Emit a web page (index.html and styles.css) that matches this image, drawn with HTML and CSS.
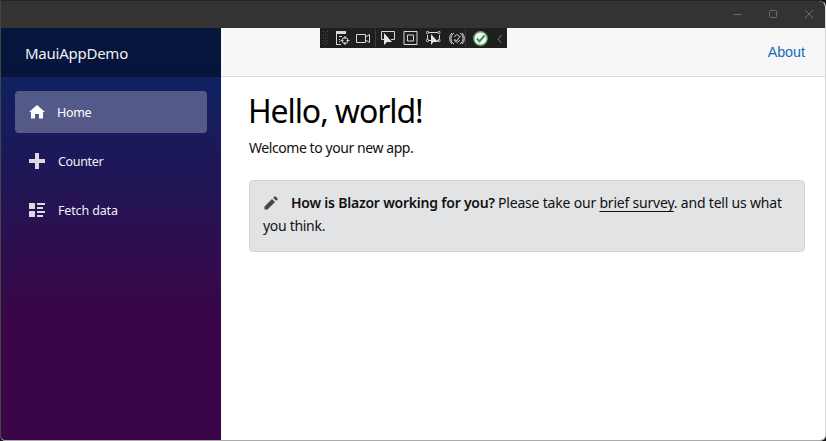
FILE: index.html
```html
<!DOCTYPE html>
<html lang="en">
<head>
<meta charset="utf-8">
<title>MauiAppDemo</title>
<link rel="stylesheet" href="styles.css">
</head>
<body>
<div class="window">
  <header class="titlebar">
    <svg class="caption" width="92" height="12" viewBox="0 0 92 12" fill="none" stroke="#6c6c6c">
      <path d="M1 6.500h8"/><rect x="36.500" y="2.500" width="7" height="7" rx="1"/><path d="M72 2l8 8M80 2l-8 8"/>
    </svg>
  </header>
  <div class="page">
    <aside class="sidebar">
      <div class="brand"><span class="brand-name">MauiAppDemo</span></div>
      <nav class="nav">
        <a class="item active"><svg width="16" height="16" viewBox="0 0 16 16" fill="#fff"><path d="M8 1 0 8h2v6.500h4V10h4v4.500h4V8h2z"/></svg><span class="home">Home</span></a>
        <a class="item"><svg width="16" height="16" viewBox="0 0 16 16" fill="#dcd9e2"><path d="M6 0h4v6h6v4h-6v6H6v-6H0V6h6z"/></svg><span class="counter">Counter</span></a>
        <a class="item"><svg width="16" height="16" viewBox="0 0 16 16" fill="#dcd9e2"><path d="M0 1h6v6H0zM0 9h6v6H0zM8 1h8v2H8zM8 5h6v2H8zM8 9h8v2H8zM8 13h6v2H8z"/></svg><span class="fetch">Fetch data</span></a>
      </nav>
    </aside>
    <main class="main">
      <div class="topbar"><a class="about">About</a></div>
      <article class="content">
        <h1><span>Hello, world!</span></h1>
        <p class="welcome"><span>Welcome to your new app.</span></p>
        <div class="alert">
          <svg class="pencil" width="16" height="16" viewBox="0 0 16 16" fill="#454647"><path d="M12 1 10.200 2.800l3 3L15 4zM9 4 1.500 11.500v3h3L12 7z"/></svg><strong>How is Blazor working for you?</strong>
          <span class="ask">Please take our <a class="survey">brief survey</a>. and tell us what</span><br><span class="think">you think.</span>
        </div>
      </article>
    </main>
  </div>
  <div class="debugbar">
    <svg width="187" height="20" viewBox="0 0 187 20" fill="none" stroke="#d8d8d8" stroke-width="1">
      <path d="M3.500 3v15M5.500 4v14M7.500 3v15" stroke="#484848" stroke-dasharray="1 2"/>
      <path d="M16 4.500h10" stroke-width="3"/><path d="M16.500 6v11M16 16.500h5M19 8.500h3M19 11.500h1M19 13.500h1"/>
      <circle cx="25" cy="12.500" r="3"/><path d="M25 8v3M25 14v3M20.500 12.500h3M26.500 12.500h3"/>
      <path d="M36.500 6.500h9v8h-9zM45.500 9l4-2.500v8l-4-2.500"/>
      <path d="M55.500 1v18M145.500 1v18" stroke="#3c3c3c"/>
      <path d="M64 11.500h-2.500v-8h13v8H71"/><path d="M64 5v12l3-3h5z" fill="#e4e4e4" stroke="none"/>
      <path d="M84 3.500h13v13H84zM87.500 7h6v6h-6z"/>
      <path d="M109 4.500h9M107.500 7v4M119.500 7v4M108 12.500h3M117 12.500h2"/>
      <path d="M106.500 3.500h2v2h-2zM118 3.500h2v2h-2zM106.500 11.500h2v2h-2zM118 11.500h2v2h-2z" stroke="#aaa"/>
      <path d="M111 6v11l2.500-3h4.500z" fill="#e4e4e4" stroke="none"/>
      <path d="M134 5c-4 2-4 9 0 11M140 5c4 2 4 9 0 11M132 5c-3 3-3 8 0 11M142 5c3 3 3 8 0 11"/><path d="M134.500 9c1-3 4-3 5 0M139.500 12c-1 3-4 3-5 0M134.500 11l2 2 4-5"/>
      <circle cx="160.500" cy="10.500" r="6.700" fill="#f2f5f2" stroke="#63aa69" stroke-width="1.400"/><path d="m157 10.500 2.500 3 5-6" stroke="#39934a" stroke-width="2"/>
      <path d="m181.500 7-3.500 4 3.500 4" stroke="#777"/>
    </svg>
  </div>
</div>
</body>
</html>
```

FILE: styles.css
```css
* { box-sizing: border-box; }
body { margin: 0; background: #151515; font-family: "Noto Sans", sans-serif; font-size: 14px; color: #111; }
.window { position: relative; width: 826px; height: 441px; border: 1px solid #454545; border-top-color: #222; border-right-color: #d8d8d8; border-bottom-color: #aaa; border-radius: 0 7px 6px 5px; overflow: hidden; background: #fff; display: flex; flex-direction: column; }
.titlebar { height: 27px; flex: none; background: #333; display: flex; justify-content: flex-end; align-items: center; }
.caption { margin-top: -2px; }
.page { flex: 1; display: flex; }
.sidebar { width: 220px; background: linear-gradient(180deg, #052767 0%, #3a0647 70%); color: #f1f0f5; }
.brand { height: 49px; padding-left: 24px; display: flex; align-items: center; background: rgba(0, 0, 0, .4); font-size: 15px; }
.brand-name { letter-spacing: -.25px; }
.nav { padding: 14px; display: flex; flex-direction: column; gap: 7px; font-size: 12.500px; }
.item { height: 42px; border-radius: 4px; display: flex; align-items: center; padding-left: 14px; gap: 13px; }
.item span { letter-spacing: -.35px; }
.item .fetch { letter-spacing: -.15px; }
.active { background: rgba(255, 255, 255, .27); color: #fff; }
.active span { margin-left: -1px; }
.main { flex: 1; min-width: 0; }
.topbar { height: 49px; background: #f7f7f7; border-bottom: 1px solid #d8d8d8; display: flex; justify-content: flex-end; align-items: center; padding-right: 20px; }
.about { color: #146bb5; font: 14.300px "Liberation Sans", sans-serif; }
.content { padding: 14px 20px 0 27px; }
h1 { margin: 0; font-size: 32px; line-height: 40px; font-weight: 400; letter-spacing: -1.100px; color: #000; }
.welcome { margin: 5px 0 20px 1px; line-height: 24px; letter-spacing: -.430px; }
.alert { height: 72px; margin-left: 1px; padding: 10px 13px; border: 1px solid #d2d4d6; border-radius: 4px; background: #e2e3e5; line-height: 23px; white-space: nowrap; letter-spacing: -.3px; }
.pencil { margin-right: 12px; vertical-align: -3px; }
strong { font-weight: 600; letter-spacing: -.220px; }
.ask { letter-spacing: -.200px; }
.survey { text-decoration: underline; text-decoration-thickness: 1px; text-underline-offset: 3px; }
.debugbar { position: absolute; left: 319px; top: 27px; width: 187px; height: 20px; background: #1f1f1f; }
.debugbar svg { display: block; }
```
